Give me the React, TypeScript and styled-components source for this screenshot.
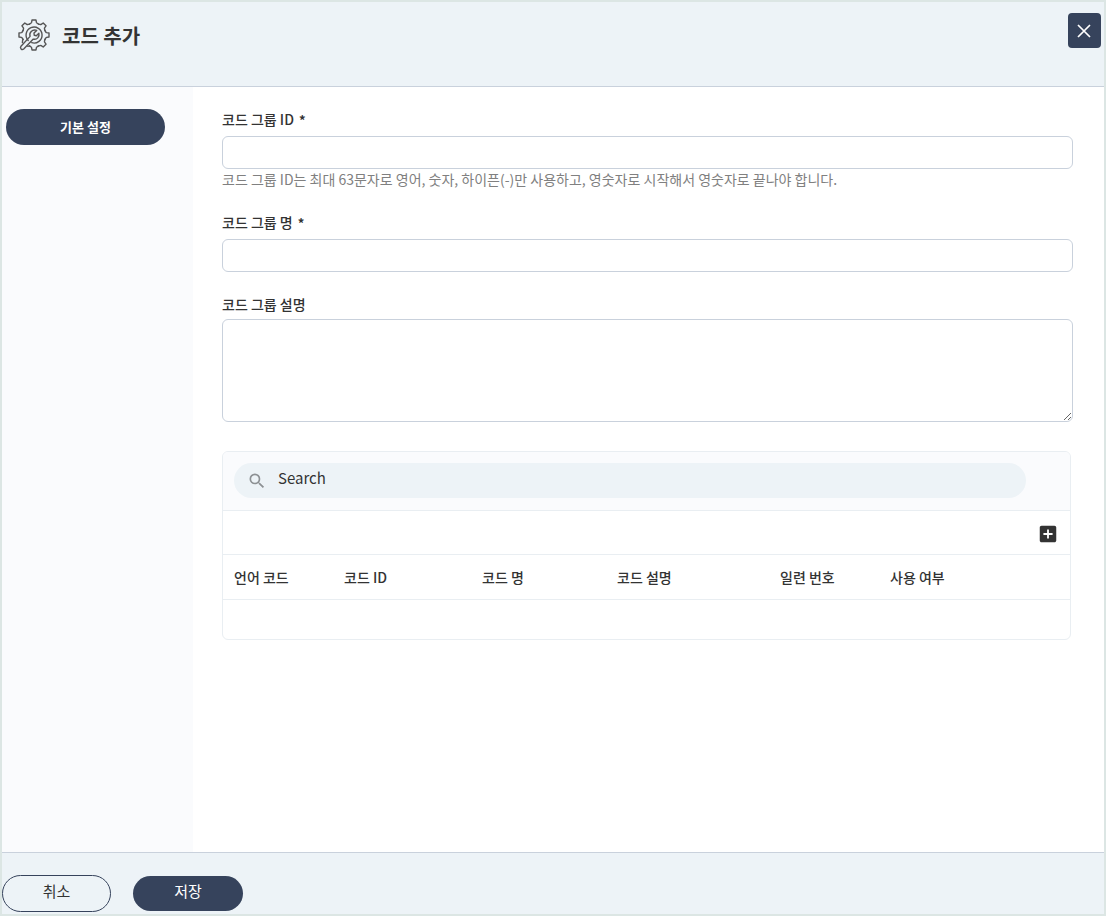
import React from "react";
import styled, { createGlobalStyle } from "styled-components";

const GlobalStyle = createGlobalStyle`
  *, *::before, *::after { box-sizing: border-box; }
  body {
    margin: 0;
    color: #333;
    background: #fff;
    font: 400 14px/20px "Noto Sans CJK KR", "Noto Sans", sans-serif;
  }
  button, input, textarea { font: inherit; color: inherit; }
`;

const navy = "#36435c";
const line = "#c9d1dc";
const softLine = "#e9eef2";
const panel = "#edf3f7";
const pale = "#fafbfd";

const Dialog = styled.div`
  display: flex;
  flex-direction: column;
  min-height: 100vh;
  border: 2px solid #dce6e4;
`;

const Header = styled.header`
  display: flex;
  align-items: flex-start;
  justify-content: space-between;
  height: 85px;
  padding: 11px 3px 0 16px;
  background: ${panel};
  border-bottom: 1px solid ${line};
`;

const TitleGroup = styled.div`
  display: flex;
  align-items: center;
  gap: 12px;
  height: 46px;
`;

const Title = styled.h1`
  margin: 0;
  font-size: 20px;
  line-height: 28px;
  font-weight: 700;
`;

const CloseButton = styled.button`
  display: flex;
  align-items: center;
  justify-content: center;
  width: 33px;
  height: 35px;
  padding: 0 2px 0 0;
  border: 0;
  border-radius: 4px;
  background: ${navy};
  color: #fff;
  cursor: pointer;
`;

const Body = styled.div`
  display: flex;
  flex: 1;
`;

const Sidebar = styled.nav`
  flex: none;
  width: 191px;
  padding: 22px 28px 22px 4px;
  background: ${pale};
`;

const SideTab = styled.button`
  width: 100%;
  height: 36px;
  padding: 0;
  border: 0;
  border-radius: 18px;
  background: ${navy};
  color: #fff;
  font-size: 13px;
  font-weight: 700;
  cursor: pointer;
`;

const Main = styled.main`
  flex: 1;
  min-width: 0;
  padding: 22px 31px 22px 29px;
`;

const Field = styled.div<{ $gap?: number; $labelGap?: number }>`
  display: flex;
  flex-direction: column;
  gap: ${(p) => p.$labelGap ?? 7}px;
  margin-bottom: ${(p) => p.$gap ?? 22}px;
`;

const Label = styled.label`
  font-weight: 500;
`;

const Required = styled.span`
  margin-left: 5px;
  font-weight: 700;
  font-size: 13px;
  line-height: 1;
`;

const TextInput = styled.input`
  display: block;
  width: 100%;
  height: 33px;
  padding: 0 10px;
  border: 1px solid ${line};
  border-radius: 6px;
  background: #fff;
`;

const TextArea = styled.textarea`
  display: block;
  width: 100%;
  height: 103px;
  padding: 8px 10px;
  border: 1px solid ${line};
  border-radius: 6px;
  background: #fff;
  resize: vertical;
`;

const Hint = styled.p`
  margin: 0;
  color: #808080;
`;

const Card = styled.section`
  margin-right: 2px;
  border: 1px solid ${softLine};
  border-radius: 6px;
  overflow: hidden;
`;

const SearchBar = styled.div`
  padding: 11px 44px 12px 11px;
  background: ${pale};
  border-bottom: 1px solid ${softLine};
`;

const SearchBox = styled.label`
  display: flex;
  align-items: center;
  gap: 11px;
  height: 35px;
  padding: 0 13px;
  border-radius: 18px;
  background: ${panel};
`;

const SearchInput = styled.input`
  flex: 1;
  min-width: 0;
  height: 32px;
  padding: 0 0 4px;
  border: 0;
  outline: 0;
  background: transparent;
  font-size: 15px;
  align-self: flex-start;
  &::placeholder { color: #333; opacity: 1; }
`;

const Toolbar = styled.div`
  display: flex;
  align-items: center;
  justify-content: flex-end;
  height: 44px;
  padding: 2px 11px 0;
  border-bottom: 1px solid ${softLine};
`;

const AddButton = styled.button`
  display: flex;
  padding: 0;
  border: 0;
  background: none;
  color: #333;
  cursor: pointer;
`;

const Table = styled.table`
  width: 100%;
  table-layout: fixed;
  border-spacing: 0;
`;

const HeadCell = styled.th<{ $width?: number }>`
  width: ${(p) => (p.$width ? `${p.$width}px` : "auto")};
  height: 45px;
  padding: 0 0 0 11px;
  border-bottom: 1px solid ${softLine};
  font-weight: 500;
  text-align: left;
`;

const EmptyCell = styled.td`
  height: 39px;
  padding: 0;
`;

const Footer = styled.footer`
  display: flex;
  align-items: center;
  gap: 22px;
  height: 62px;
  padding-top: 20px;
  background: ${panel};
  border-top: 1px solid ${line};
`;

const FooterButton = styled.button<{ $primary?: boolean }>`
  width: ${(p) => (p.$primary ? 110 : 109)}px;
  height: ${(p) => (p.$primary ? 35 : 37)}px;
  padding: 0 0 5px;
  border: ${(p) => (p.$primary ? "0" : `1px solid ${navy}`)};
  border-radius: 19px;
  background: ${(p) => (p.$primary ? navy : "transparent")};
  color: ${(p) => (p.$primary ? "#fff" : "#333")};
  font-size: 15px;
  font-weight: 400;
  cursor: pointer;
`;

const GearWrenchIcon = () => (
  <svg width="32" height="34" viewBox="-16 -16 32 34" fill="none" stroke="#555" strokeWidth="1.4" strokeLinejoin="round" strokeLinecap="round" aria-hidden="true">
    {[0, 45, 90, 135, 180, 270, 315].map((angle) => (
      <path
        key={angle}
        transform={`rotate(${angle})`}
        d="M-4.5 -10.9C-3.4 -11.8 -2.7 -11.6 -2.4 -12.6L-2 -15H2L2.4 -12.6C2.7 -11.6 3.4 -11.8 4.5 -10.9"
      />
    ))}
    <path d="M-5.8 5.5A8 8 0 1 1 -2.3 7.7" />
    <path d="M-10.9 4.5C-11.8 5.2 -11.2 5.6 -11.6 7.6" />
    <path d="M-4.5 10.9L-6.2 11.4" />
    <path d="M2.7 -4.6L0 -1.9L.3 .3L2.3 .7L4.9 -1.8C5.8 1.9 2.9 5 -.7 4.1L-10.3 14C-12.2 15.5 -14.5 13.2 -13 11.3L-3.9 1.4C-5.2 -2.4 -1.8 -6 2.7 -4.6Z" />
  </svg>
);

const CloseIcon = () => (
  <svg width="14" height="14" viewBox="0 0 14 14" fill="none" stroke="currentColor" strokeWidth="1.7" aria-hidden="true">
    <path d="M1 1L13 13M13 1L1 13" />
  </svg>
);

const SearchIcon = () => (
  <svg width="20" height="20" viewBox="0 0 24 24" fill="#8d9194" aria-hidden="true">
    <path d="M15.5 14h-.79l-.28-.27A6.471 6.471 0 0 0 16 9.5 6.5 6.5 0 1 0 9.5 16c1.61 0 3.09-.59 4.23-1.57l.27.28v.79l5 4.99L20.49 19l-4.99-5zm-6 0C7.01 14 5 11.99 5 9.5S7.01 5 9.5 5 14 7.01 14 9.5 11.99 14 9.5 14z" />
  </svg>
);

const AddBoxIcon = () => (
  <svg width="22" height="22" viewBox="0 0 24 24" fill="currentColor" aria-hidden="true">
    <path d="M19 3H5c-1.11 0-2 .9-2 2v14c0 1.1.89 2 2 2h14c1.1 0 2-.9 2-2V5c0-1.1-.9-2-2-2zm-2 10h-4v4h-2v-4H7v-2h4V7h2v4h4v2z" />
  </svg>
);

const columns: { name: string; width?: number }[] = [
  { name: "언어 코드", width: 110 },
  { name: "코드 ID", width: 138 },
  { name: "코드 명", width: 135 },
  { name: "코드 설명", width: 163 },
  { name: "일련 번호", width: 110 },
  { name: "사용 여부" },
];

export default function App() {
  return (
    <>
      <GlobalStyle />
      <Dialog>
        <Header>
          <TitleGroup>
            <GearWrenchIcon />
            <Title>코드 추가</Title>
          </TitleGroup>
          <CloseButton type="button" aria-label="닫기">
            <CloseIcon />
          </CloseButton>
        </Header>
        <Body>
          <Sidebar>
            <SideTab type="button">기본 설정</SideTab>
          </Sidebar>
          <Main>
            <Field $gap={23}>
              <Label htmlFor="group-id">코드 그룹 ID<Required>*</Required></Label>
              <div>
                <TextInput id="group-id" required aria-describedby="group-id-hint" />
                <Hint id="group-id-hint">
                  코드 그룹 ID는 최대 63문자로 영어, 숫자, 하이픈(-)만 사용하고, 영숫자로 시작해서 영숫자로 끝나야 합니다.
                </Hint>
              </div>
            </Field>
            <Field>
              <Label htmlFor="group-name">코드 그룹 명<Required>*</Required></Label>
              <TextInput id="group-name" required />
            </Field>
            <Field $gap={29} $labelGap={5}>
              <Label htmlFor="group-desc">코드 그룹 설명</Label>
              <TextArea id="group-desc" />
            </Field>
            <Card>
              <SearchBar>
                <SearchBox>
                  <SearchIcon />
                  <SearchInput type="text" aria-label="Search" placeholder="Search" />
                </SearchBox>
              </SearchBar>
              <Toolbar>
                <AddButton type="button" aria-label="추가">
                  <AddBoxIcon />
                </AddButton>
              </Toolbar>
              <Table>
                <thead>
                  <tr>
                    {columns.map((column) => (
                      <HeadCell key={column.name} scope="col" $width={column.width}>
                        {column.name}
                      </HeadCell>
                    ))}
                  </tr>
                </thead>
                <tbody>
                  <tr>
                    <EmptyCell colSpan={columns.length} />
                  </tr>
                </tbody>
              </Table>
            </Card>
          </Main>
        </Body>
        <Footer>
          <FooterButton type="button">취소</FooterButton>
          <FooterButton type="button" $primary>저장</FooterButton>
        </Footer>
      </Dialog>
    </>
  );
}
